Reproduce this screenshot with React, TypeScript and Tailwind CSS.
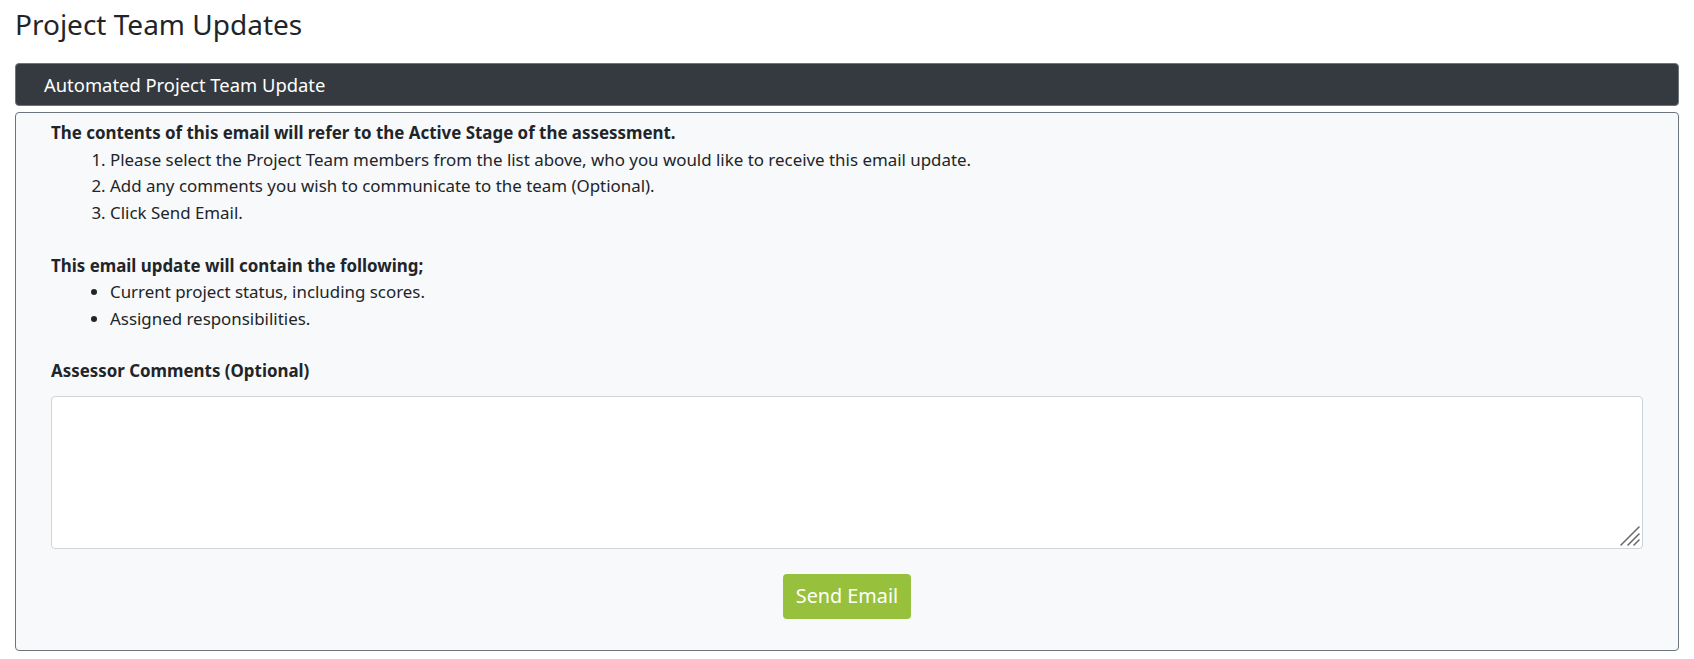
export default function App() {
  return (
    <div className="min-h-screen bg-white px-[15px] text-[#212529]" style={{ fontFamily: '"Noto Sans", "Open Sans", sans-serif' }}>
      <h3 className="pt-[4px] text-[28px] leading-[40px] font-normal">Project Team Updates</h3>

      <div className="mt-[19px] flex h-[43px] items-center rounded-[4px] border border-[#6c757d] bg-[#343a40] pl-[28px] text-[18.4px] text-white">
        Automated Project Team Update
      </div>

      <div className="mt-[6px] rounded-[4px] border border-[#6c757d] bg-[#f8f9fa] px-[35px] pt-[7px] pb-[31px] text-[16.9px] leading-[26.5px]">
        <p className="font-bold">The contents of this email will refer to the Active Stage of the assessment.</p>
        <ol className="list-decimal pl-[59px] mb-[26.5px]">
          <li>Please select the Project Team members from the list above, who you would like to receive this email update.</li>
          <li>Add any comments you wish to communicate to the team (Optional).</li>
          <li>Click Send Email.</li>
        </ol>

        <p className="font-bold">This email update will contain the following;</p>
        <ul className="list-disc pl-[59px] mb-[26px]">
          <li>Current project status, including scores.</li>
          <li>Assigned responsibilities.</li>
        </ul>

        <label className="block font-bold mb-[11px]">Assessor Comments (Optional)</label>
        <div className="relative">
          <textarea className="block h-[153px] w-full resize-none rounded-[4px] border border-[#ced4da] bg-white px-3 py-2 outline-none" />
          {/* resize grip */}
          <svg className="pointer-events-none absolute right-[2px] bottom-[2px]" width="22" height="22" viewBox="0 0 22 22">
            <g stroke="#6b6b6b" strokeWidth="1.6" strokeLinecap="round">
              <line x1="2" y1="20" x2="20" y2="2" />
              <line x1="9" y1="20" x2="20" y2="9" />
              <line x1="15" y1="20" x2="20" y2="15" />
            </g>
          </svg>
        </div>

        <div className="mt-[25px] flex justify-center">
          <button className="h-[45px] w-[128px] rounded-[4px] bg-[#97c13c] text-[19.8px] text-white">Send Email</button>
        </div>
      </div>
    </div>
  );
}
